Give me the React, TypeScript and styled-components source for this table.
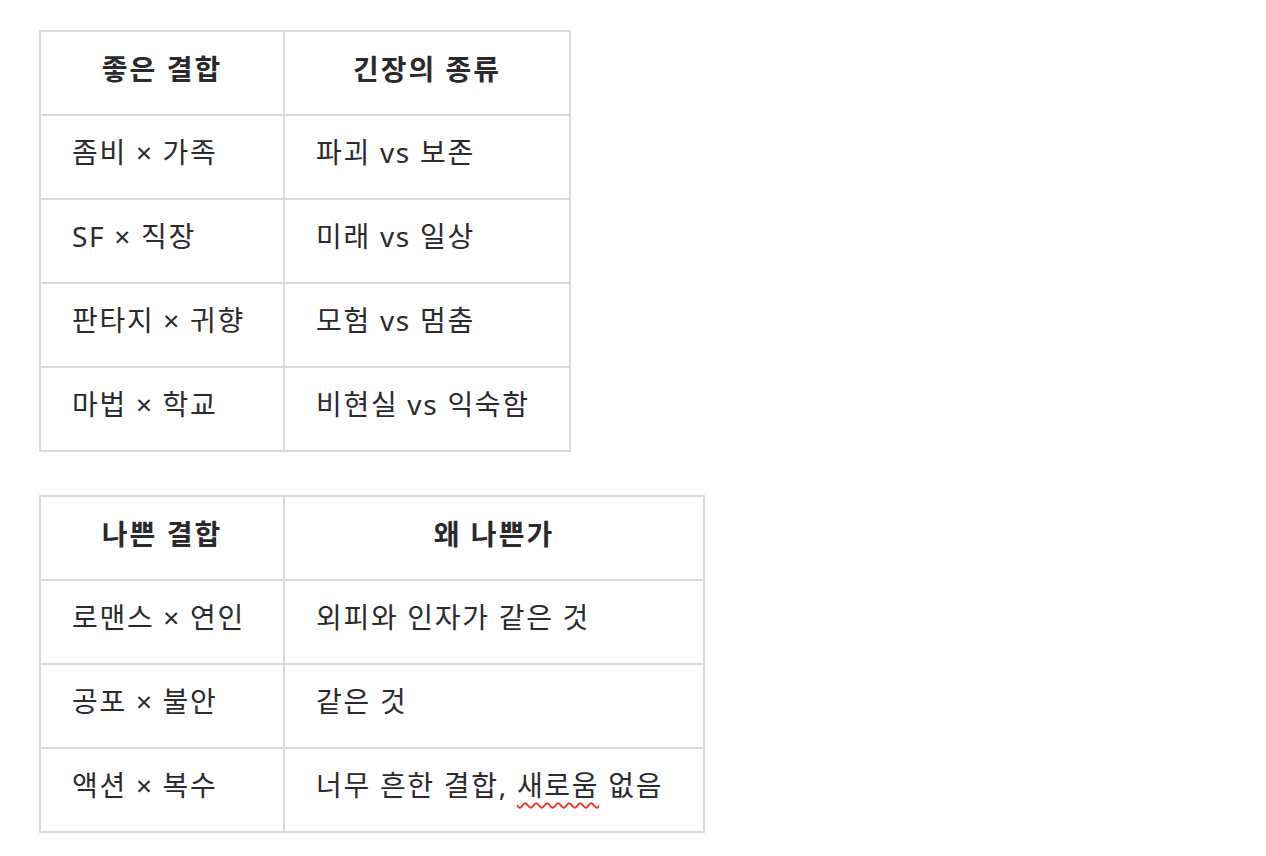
import styled, { createGlobalStyle } from "styled-components";

const GlobalStyle = createGlobalStyle`
  body {
    margin: 0;
    background: #ffffff;
    font-family: "Noto Sans", "Noto Sans CJK KR", sans-serif;
    color: #2a2a2d;
  }
`;

type Row = [string, string];

const goodRows: Row[] = [
  ["좀비 × 가족", "파괴 vs 보존"],
  ["SF × 직장", "미래 vs 일상"],
  ["판타지 × 귀향", "모험 vs 멈춤"],
  ["마법 × 학교", "비현실 vs 익숙함"],
];

const badRows: Row[] = [
  ["로맨스 × 연인", "외피와 인자가 같은 것"],
  ["공포 × 불안", "같은 것"],
];

const Page = styled.div`
  padding: 30px 0 0 39px;
  display: flex;
  flex-direction: column;
  gap: 43px;
`;

const Table = styled.table<{ $second: number }>`
  border-collapse: collapse;
  border: 2px solid #d5d9e0;
  table-layout: fixed;
  width: ${(p) => 245 + p.$second}px;

  col:first-child {
    width: 244px;
  }
`;

const Head = styled.th`
  height: 73px;
  padding: 0 31px 9px;
  border: 2px solid #d5d9e0;
  font-size: 28px;
  line-height: 34px;
  font-weight: 700;
  text-align: center;
  letter-spacing: 2px;
`;

const Cell = styled.td`
  height: 72px;
  padding: 0 31px 10px;
  border: 2px solid #d5d9e0;
  font-size: 28px;
  line-height: 34px;
  font-weight: 400;
  text-align: left;
  white-space: nowrap;
  letter-spacing: 1.7px;
`;

const Typo = styled.span`
  text-decoration: underline wavy #e5372f;
  text-decoration-thickness: 1.5px;
  text-underline-offset: 6px;
`;

export default function App() {
  return (
    <>
      <GlobalStyle />
      <Page>
        <Table $second={287}>
          <colgroup>
            <col />
            <col />
          </colgroup>
          <thead>
            <tr>
              <Head>좋은 결합</Head>
              <Head>긴장의 종류</Head>
            </tr>
          </thead>
          <tbody>
            {goodRows.map(([a, b]) => (
              <tr key={a}>
                <Cell>{a}</Cell>
                <Cell>{b}</Cell>
              </tr>
            ))}
          </tbody>
        </Table>
        <Table $second={421}>
          <colgroup>
            <col />
            <col />
          </colgroup>
          <thead>
            <tr>
              <Head>나쁜 결합</Head>
              <Head>왜 나쁜가</Head>
            </tr>
          </thead>
          <tbody>
            {badRows.map(([a, b]) => (
              <tr key={a}>
                <Cell>{a}</Cell>
                <Cell>{b}</Cell>
              </tr>
            ))}
            <tr>
              <Cell>액션 × 복수</Cell>
              <Cell>
                너무 흔한 결합, <Typo>새로움</Typo> 없음
              </Cell>
            </tr>
          </tbody>
        </Table>
      </Page>
    </>
  );
}
